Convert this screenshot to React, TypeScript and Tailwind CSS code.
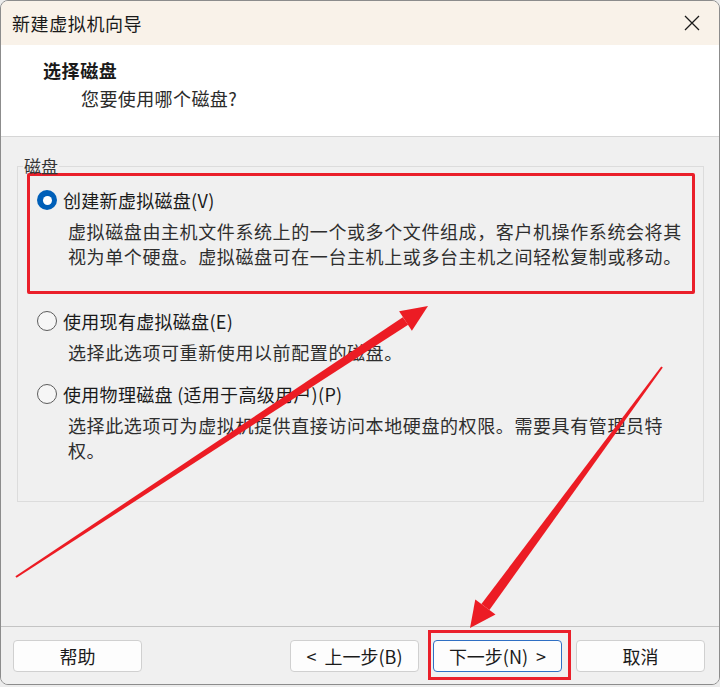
import React from "react";

const font = { fontFamily: '"Noto Sans CJK SC", "Noto Sans", sans-serif' };

function Radio({ checked }: { checked?: boolean }) {
  if (checked) {
    return (
      <span className="flex h-[20px] w-[20px] shrink-0 items-center justify-center rounded-full bg-[#005fb8]">
        <span className="h-[9px] w-[9px] rounded-full bg-white" />
      </span>
    );
  }
  return (
    <span className="h-[20px] w-[20px] shrink-0 rounded-full border-[1.5px] border-[#5c5c5c] bg-[#f6f6f6]" />
  );
}

function Option({
  checked,
  label,
  lines,
}: {
  checked?: boolean;
  label: string;
  lines: string[];
}) {
  return (
    <div>
      <div className="flex h-[24px] items-center gap-[6px]">
        <Radio checked={checked} />
        <span className="text-[18px] leading-[24px] tracking-[0.3px] text-[#1a1a1a]">{label}</span>
      </div>
      <div className="ml-[31px] mt-[7px] text-[18px] leading-[25px] tracking-[0.6px] text-[#2e2e2e]">
        {lines.map((l) => (
          <div key={l} className="whitespace-nowrap">
            {l}
          </div>
        ))}
      </div>
    </div>
  );
}

function Button({ children, focused }: { children: React.ReactNode; focused?: boolean }) {
  return (
    <button
      className={
        focused
          ? "h-[32px] w-[129px] rounded-[4px] border border-[#2f6fc4] bg-[#fdfdfd] text-[18px] text-[#1a1a1a]"
          : "h-[32px] w-[129px] rounded-[4px] border border-[#d0d0d0] bg-[#fdfdfd] text-[18px] text-[#1a1a1a]"
      }
    >
      {children}
    </button>
  );
}

export default function App() {
  return (
    <div className="relative h-[687px] w-[720px] bg-[#ececec]" style={font}>
      <div className="flex h-[685px] w-[720px] flex-col overflow-hidden rounded-[8px] border border-[#8c8c8c]">
        {/* title bar */}
        <div className="flex h-[44px] shrink-0 items-center justify-between bg-[#f9f2e9] pl-[11px] pr-[19px]">
          <span className="text-[18px] tracking-[0.6px] text-[#1a1a1a]">新建虚拟机向导</span>
          <svg width="16" height="16" viewBox="0 0 16 16" fill="none" stroke="#1a1a1a" strokeWidth="1.3">
            <path d="M1 1 L15 15 M15 1 L1 15" />
          </svg>
        </div>

        {/* header */}
        <div className="h-[92px] shrink-0 border-b border-[#d6d6d6] bg-white pl-[42px] pt-[13px]">
          <div className="text-[18px] font-bold leading-[24px] tracking-[0.6px] text-[#1a1a1a]">选择磁盘</div>
          <div className="mt-[4px] pl-[38px] text-[18px] leading-[24px] tracking-[0.4px] text-[#2a2a2a]">
            您要使用哪个磁盘?
          </div>
        </div>

        {/* body */}
        <div className="flex-1 bg-[#f0f0f0] pl-[16px] pt-[22px]">
          <fieldset className="h-[343px] w-[687px] border border-[#dcdcdc]">
            <legend className="ml-[5px] px-[1px] text-[17px] leading-[14px] text-[#333333]">磁盘</legend>
            <div className="ml-[9px] mr-[8px] rounded-[2px] border-[3px] border-[#ea1f2a] pb-[22px] pl-[7px] pt-[12px]">
              <Option
                checked
                label="创建新虚拟磁盘(V)"
                lines={[
                  "虚拟磁盘由主机文件系统上的一个或多个文件组成，客户机操作系统会将其",
                  "视为单个硬盘。虚拟磁盘可在一台主机上或多台主机之间轻松复制或移动。",
                ]}
              />
            </div>
            <div className="mt-[15px] pl-[19px]">
              <Option label="使用现有虚拟磁盘(E)" lines={["选择此选项可重新使用以前配置的磁盘。"]} />
            </div>
            <div className="mt-[17px] pl-[19px]">
              <Option
                label="使用物理磁盘 (适用于高级用户)(P)"
                lines={[
                  "选择此选项可为虚拟机提供直接访问本地硬盘的权限。需要具有管理员特",
                  "权。",
                ]}
              />
            </div>
          </fieldset>
        </div>

        {/* footer buttons */}
        <div className="relative flex h-[58px] shrink-0 items-start border-t border-[#c4c4c4] bg-[#f0f0f0] pl-[12px] pr-[14px] pt-[13px]">
          <Button>帮助</Button>
          <div className="ml-auto flex gap-[14px]">
            <Button>&lt;&nbsp; 上一步(B)</Button>
            <Button focused>下一步(N)&nbsp; &gt;</Button>
            <Button>取消</Button>
          </div>
          <div className="pointer-events-none absolute left-[427px] top-[3px] h-[50px] w-[143px] border-[3px] border-[#ea1f2a]" />
        </div>
      </div>

      {/* annotation arrows */}
      <svg className="pointer-events-none absolute left-0 top-0" width="720" height="687" viewBox="0 0 720 687">
        <g fill="#ec1c24">
          <polygon points="15.4,576.2 402.8,317.3 408.2,324.7 16.6,577.8" />
          <polygon points="428,306 399.1,311.2 411.9,330.8" />
          <polygon points="661.2,366.4 481.4,604 489.4,610 662.8,367.6" />
          <polygon points="470,628 475.3,599.6 495.5,614.4" />
        </g>
      </svg>
    </div>
  );
}
